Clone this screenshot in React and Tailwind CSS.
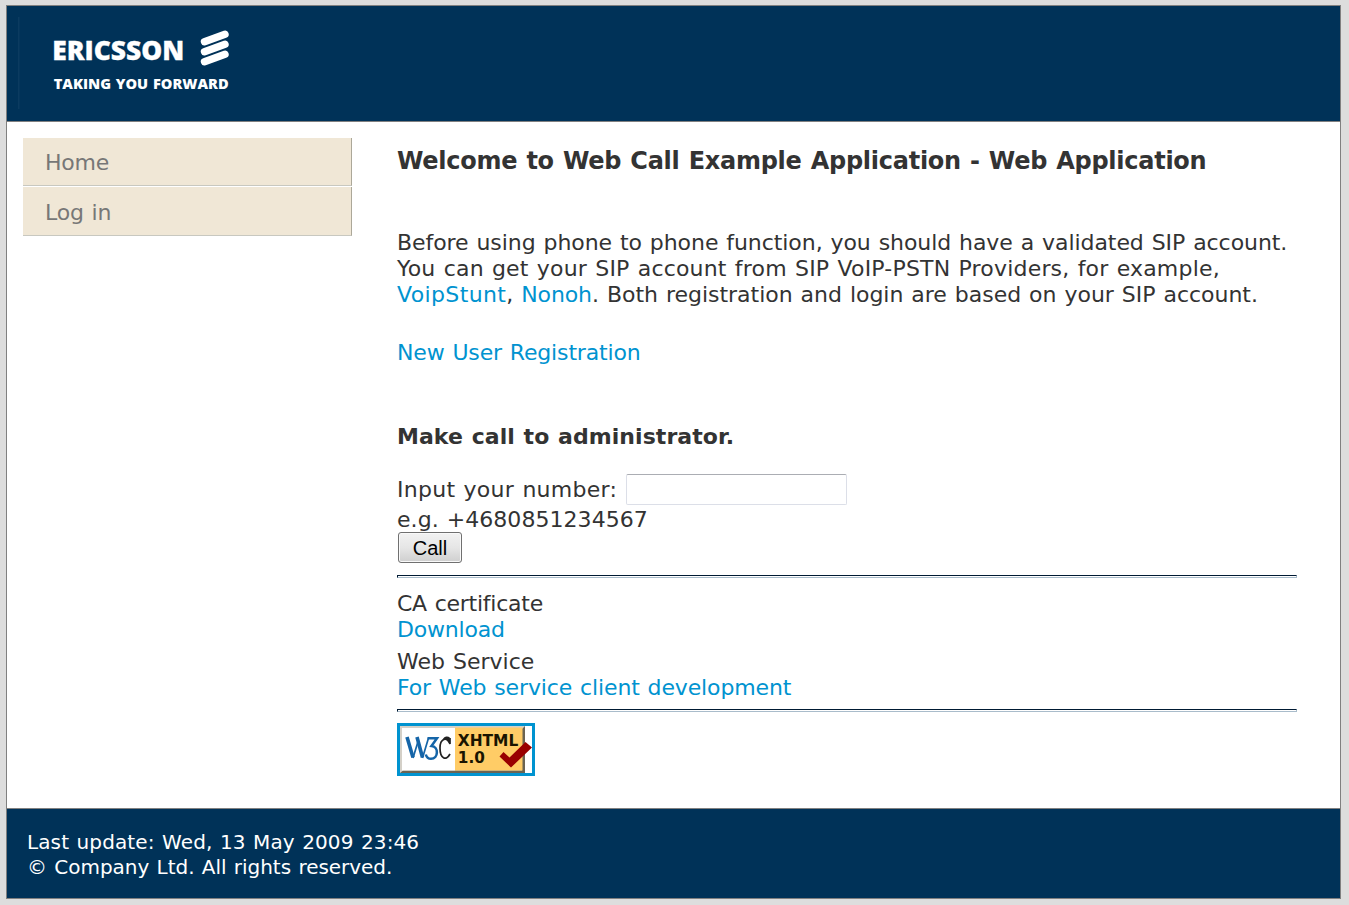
import React from "react";

const link = "text-[#0093d0] no-underline";

function Logo() {
  return (
    <svg width="240" height="115" viewBox="7 6 240 115" className="block" role="img" aria-label="Ericsson">
      <rect x="18" y="17" width="1.5" height="92" fill="#0b3b60" />
      <g fill="#ffffff" stroke="#ffffff" fontFamily="'Open Sans', sans-serif" fontWeight="800">
        <text x="52.2" y="60" fontSize="26" textLength="132" lengthAdjust="spacingAndGlyphs" strokeWidth="0.3">ERICSSON</text>
        <text x="53.7" y="88.8" fontSize="14.6" textLength="175" lengthAdjust="spacingAndGlyphs" strokeWidth="0">TAKING YOU FORWARD</text>
      </g>
      <g stroke="#ffffff" strokeWidth="7.4" strokeLinecap="round">
        <path d="M204.5 41.7 L225 34.3" />
        <path d="M204.5 51.7 L225 44.3" />
        <path d="M204.5 61.7 L225 54.3" />
      </g>
    </svg>
  );
}

function XhtmlBadge() {
  return (
    <svg width="138" height="53" viewBox="397 723 138 53" className="block" role="img" aria-label="Valid XHTML 1.0">
      <rect x="397" y="723" width="138" height="53" fill="#0093d0" />
      <rect x="400" y="726" width="132" height="47" fill="#ffffff" />
      <rect x="400" y="726" width="125" height="47" fill="#d4d0c8" />
      <path d="M525 726 V773 H400 L403 770.5 H522 V729 Z" fill="#6b6452" />
      <rect x="402" y="728" width="53" height="42.5" fill="#ffffff" />
      <rect x="455" y="727.5" width="67.5" height="43" fill="#ffcc66" />
      <g fill="none" stroke="#1565a8">
        <path d="M407 737 L413 757.5 M417 737 L422.5 757.5" strokeWidth="3.6" />
        <path d="M413 758 L418.5 740 M422.5 758 L428.5 738" strokeWidth="1.7" />
        <path d="M427.5 738.3 H437 L431.5 746 C439 746.5 438.5 758.8 431 758.8 C428 758.8 426.5 757 425.8 754.5" strokeWidth="2.5" />
      </g>
      <path d="M450 738 V744 C447 736.5 440 738 440 748 C440 758.5 446 761.5 450 754" fill="none" stroke="#222222" strokeWidth="1.7" />
      <path d="M449.8 737.5 L450 744 L447 740.5 C445 738.5 443.5 739 442 741.5 C443.5 735.5 448 736 449.8 737.5 Z" fill="#222222" />
      <g fill="#1a1400" fontFamily="'DejaVu Sans', sans-serif" fontWeight="700">
        <text x="457.8" y="746" fontSize="15" textLength="60.5" lengthAdjust="spacingAndGlyphs" style={{ wordSpacing: 0 }}>XHTML</text>
        <text x="457.8" y="762.5" fontSize="15" textLength="27" lengthAdjust="spacingAndGlyphs">1.0</text>
      </g>
      <path d="M499.5 756.5 L503.5 752 L509.5 757.5 L525.5 742 L532 747.5 L511 767.5 Z" fill="#990000" />
    </svg>
  );
}

function Rule() {
  return <hr className="h-[3px] w-[900px] border border-t-[#001a33] border-r-[#a9bccb] border-b-[#a9bccb] border-l-[#001a33]" />;
}

function MenuItem({ children, className }) {
  return (
    <a href="#" className={"flex w-[329px] items-center border-r border-b border-r-[#aca899] border-b-[#c8c8c0] bg-[#f0e7d6] pl-[22px] tracking-[-0.2px] text-[#777777] " + className}>
      {children}
    </a>
  );
}

export default function App() {
  return (
    <div className="h-[905px] bg-[#dddddd] pt-[5px] pl-[6px] font-['DejaVu_Sans',sans-serif] text-[22px] leading-[26px] whitespace-nowrap text-[#333333] [word-spacing:1px]">
      <div className="flex h-[894px] w-[1335px] flex-col border border-[#808080] bg-white">
        <header className="h-[116px] shrink-0 border-b border-[#808080] bg-[#003258]">
          <Logo />
        </header>

        <div className="flex grow">
          <nav className="flex w-[390px] shrink-0 flex-col gap-px pt-[16px] pl-[16px]">
            <MenuItem className="h-[48px] pt-[2px]">Home</MenuItem>
            <MenuItem className="h-[49px] pt-[3px]">Log in</MenuItem>
          </nav>

          <main className="w-[900px]">
            <h1 className="mt-[26px] text-[24px] font-bold tracking-[-0.26px]">Welcome to Web Call Example Application - Web Application</h1>
            <div className="mt-[56px]">
              <div className="tracking-[-0.065px]">Before using phone to phone function, you should have a validated SIP account.</div>
              <div className="tracking-[0.19px]">You can get your SIP account from SIP VoIP-PSTN Providers, for example,</div>
              <div className="tracking-[-0.02px]">
                <a href="#" className={link + " tracking-[0.36px]"}>VoipStunt</a>, <a href="#" className={link + " tracking-[-0.1px]"}>Nonoh</a>. Both registration and login are based on your SIP account.
              </div>
            </div>
            <div className="mt-[32px] tracking-[-0.15px]"><a href="#" className={link}>New User Registration</a></div>
            <h2 className="mt-[58px] font-bold tracking-[0.06px]">Make call to administrator.</h2>
            <form className="mt-[24px]">
              <div className="flex h-[31px] items-start">
                <label htmlFor="number" className="w-[229px] pt-[3px] tracking-[0.27px]">Input your number:</label>
                <input id="number" type="text" className="h-[31px] w-[221px] rounded-[2px] border border-[#dcdfe8] border-t-[#abadb3] bg-white" />
              </div>
              <div className="mt-[2px] tracking-[0.05px]">e.g. +4680851234567</div>
              <button type="button" className="mt-[-1px] ml-px block h-[31px] w-[64px] rounded-[3px] border border-[#707070] bg-linear-to-b from-[#f2f2f2] from-0% via-[#e6e6e6] via-50% to-[#cfcfcf] font-['Liberation_Sans',sans-serif] text-[20px] leading-[28px] text-black shadow-[inset_0_0_0_1px_#f9f9f9]">Call</button>
            </form>
            <div className="mt-[12px]"><Rule /></div>
            <div className="mt-[13px] tracking-[-0.25px]">CA certificate</div>
            <div><a href="#" className={link + " tracking-[-0.2px]"}>Download</a></div>
            <div className="mt-[6px]">Web Service</div>
            <div className="tracking-[-0.13px]"><a href="#" className={link}>For Web service client development</a></div>
            <div className="mt-[8px]"><Rule /></div>
            <a href="#" className="mt-[11px] block w-[138px]"><XhtmlBadge /></a>
          </main>
        </div>

        <footer className="h-[90px] shrink-0 border-t border-[#808080] bg-[#003258] pt-[21px] pl-[20px] text-[20px] leading-[25px] text-white">
          <div className="tracking-[0.11px]">Last update: Wed, 13 May 2009 23:46</div>
          <div className="tracking-[-0.03px]">© Company Ltd. All rights reserved.</div>
        </footer>
      </div>
    </div>
  );
}
